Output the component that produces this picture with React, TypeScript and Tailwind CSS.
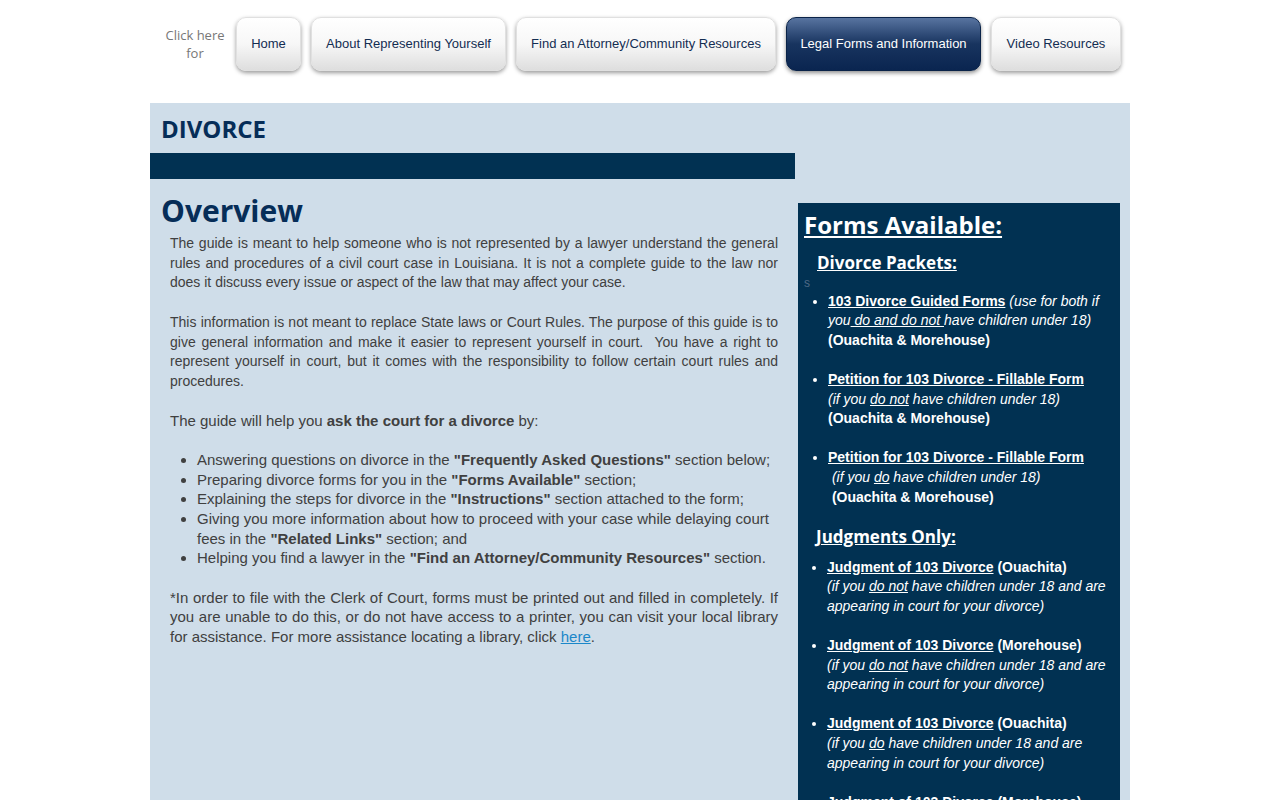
import React from "react";

const navItems = [
  { label: "Home", w: "w-[65px]" },
  { label: "About Representing Yourself", w: "w-[195px]" },
  { label: "Find an Attorney/Community Resources", w: "w-[260px]" },
  { label: "Legal Forms and Information", w: "w-[195px]", active: true },
  { label: "Video Resources", w: "w-[130px]" },
];

function NavButton({ label, w, active }: { label: string; w: string; active?: boolean }) {
  return (
    <a
      href="#"
      className={
        active
          ? `${w} h-[54px] rounded-[10px] flex items-center justify-center text-[13px] text-white bg-gradient-to-b from-[#5874a0] via-[#18345f] to-[#0a2550] shadow-[0_2px_4px_rgba(0,0,0,0.45)] border border-[#0a2348]`
          : `${w} h-[54px] rounded-[10px] flex items-center justify-center text-[13px] text-[#132d52] bg-gradient-to-b from-white via-[#f7f7f7] to-[#dedede] shadow-[0_2px_4px_rgba(0,0,0,0.4)] border border-[#e0e0e0]`
      }
    >
      {label}
    </a>
  );
}

export default function App() {
  return (
    <div className="min-h-screen bg-white font-['Liberation_Sans',Arial,sans-serif]">
      <div className="w-[980px] mx-auto">
        {/* top nav */}
        <nav className="h-[103px] flex items-start pt-[17px] pl-[10px]">
          <div className="w-[70px] h-[54px] flex flex-col items-center justify-center text-[13px] leading-[18px] text-[#777] font-['Open_Sans',sans-serif]">
            <span>Click here</span>
            <span>for</span>
          </div>
          <div className="flex gap-[10px] ml-[6px]">
            {navItems.map((n) => (
              <NavButton key={n.label} {...n} />
            ))}
          </div>
        </nav>

        {/* page body */}
        <div className="bg-[#cfdde9] flex items-start pb-10">
          {/* left column */}
          <div className="w-[645px]">
            <h1 className="pl-[11px] pt-[10px] text-[24px] leading-[32px] font-bold text-[#062d58] font-['Open_Sans',sans-serif]">
              DIVORCE
            </h1>
            <div className="mt-[8px] h-[26px] bg-[#013152]"></div>
            <h2 className="pl-[11px] mt-[14px] text-[30px] leading-[36px] font-bold text-[#062d58] font-['Open_Sans',sans-serif]">
              Overview
            </h2>
            <div className="pl-[20px] pr-[17px] mt-[5px] text-[14px] leading-[19.7px] text-[#404040] text-justify">
              <p>
                The guide is meant to help someone who is not represented by a lawyer understand the general rules and
                procedures of a civil court case in Louisiana. It is not a complete guide to the law nor does it discuss
                every issue or aspect of the law that may affect your case.
              </p>
              <p className="mt-[19.7px]">
                This information is not meant to replace State laws or Court Rules. The purpose of this guide is to give
                general information and make it easier to represent yourself in court.&nbsp; You have a right to
                represent yourself in court, but it comes with the responsibility to follow certain court rules and
                procedures.
              </p>
              <p className="mt-[19px] text-[15px]">
                The guide will help you <b>ask the court for a divorce</b> by:
              </p>
              <ul className="mt-[19.5px] list-disc pl-[27px] text-left text-[15px]">
                <li>
                  Answering questions on divorce in the <b>"Frequently Asked Questions"</b> section below;
                </li>
                <li>
                  Preparing divorce forms for you in the <b>"Forms Available"</b> section;
                </li>
                <li>
                  Explaining the steps for divorce in the <b>"Instructions"</b> section attached to the form;
                </li>
                <li>
                  Giving you more information about how to proceed with your case while delaying court fees in the{" "}
                  <b>"Related Links"</b> section; and
                </li>
                <li>
                  Helping you find a lawyer in the <b>"Find an Attorney/Community Resources"</b> section.
                </li>
              </ul>
              <p className="mt-[19.7px] text-[15px]">
                *In order to file with the Clerk of Court, forms must be printed out and filled in completely. If you are
                unable to do this, or do not have access to a printer, you can visit your local library for assistance.
                For more assistance locating a library, click{" "}
                <a href="#" className="text-[#1b87c9] underline">
                  here
                </a>
                .
              </p>
            </div>
          </div>

          {/* right column: forms */}
          <div className="w-[322px] ml-[3px] mt-[100px] bg-[#013152] text-white pb-[40px]">
            <h3 className="pl-[6px] pt-[7px] text-[24px] leading-[30px] font-bold underline font-['Open_Sans',sans-serif]">
              Forms Available:
            </h3>
            <h4 className="pl-[19px] mt-[12px] text-[17px] leading-[21.6px] font-bold underline font-['Open_Sans',sans-serif]">
              Divorce Packets:
            </h4>
            <div className="pl-[6px] text-[12px] leading-[18px] text-[#4f6a86]">s</div>
            <ul className="list-disc pl-[30px] text-[14px] leading-[19.6px]">
              <li>
                <b className="underline">103 Divorce Guided Forms</b> <i>(use for both if</i>
                <br />
                <i>
                  you<span className="underline"> do and do not </span>have children under 18)
                </i>
                <br />
                <b>(Ouachita &amp; Morehouse)</b>
              </li>
              <li className="mt-[19.6px]">
                <b className="underline">Petition for 103 Divorce - Fillable Form</b>
                <br />
                <i>
                  (if you <span className="underline">do not</span> have children under 18)
                </i>
                <br />
                <b>(Ouachita &amp; Morehouse)</b>
              </li>
              <li className="mt-[19.6px]">
                <b className="underline">Petition for 103 Divorce - Fillable Form</b>
                <br />
                <i>
                  &nbsp;(if you <span className="underline">do</span> have children under 18)
                </i>
                <br />
                <b>&nbsp;(Ouachita &amp; Morehouse)</b>
              </li>
            </ul>
            <h4 className="pl-[18px] mt-[19px] text-[17px] leading-[21.6px] font-bold underline font-['Open_Sans',sans-serif]">
              Judgments Only:
            </h4>
            <ul className="list-disc pl-[29px] mt-[10px] text-[14px] leading-[19.6px]">
              <li>
                <b className="underline">Judgment of 103 Divorce</b> <b>(Ouachita)</b>
                <br />
                <i>
                  (if you <span className="underline">do not</span> have children under 18 and are
                  <br />
                  appearing in court for your divorce)
                </i>
              </li>
              <li className="mt-[19.6px]">
                <b className="underline">Judgment of 103 Divorce</b> <b>(Morehouse)</b>
                <br />
                <i>
                  (if you <span className="underline">do not</span> have children under 18 and are
                  <br />
                  appearing in court for your divorce)
                </i>
              </li>
              <li className="mt-[19.6px]">
                <b className="underline">Judgment of 103 Divorce</b> <b>(Ouachita)</b>
                <br />
                <i>
                  (if you <span className="underline">do</span> have children under 18 and are
                  <br />
                  appearing in court for your divorce)
                </i>
              </li>
              <li className="mt-[19.6px]">
                <b className="underline">Judgment of 103 Divorce</b> <b>(Morehouse)</b>
                <br />
                <i>
                  (if you <span className="underline">do</span> have children under 18 and are
                  <br />
                  appearing in court for your divorce)
                </i>
              </li>
            </ul>
          </div>
        </div>
      </div>
    </div>
  );
}
